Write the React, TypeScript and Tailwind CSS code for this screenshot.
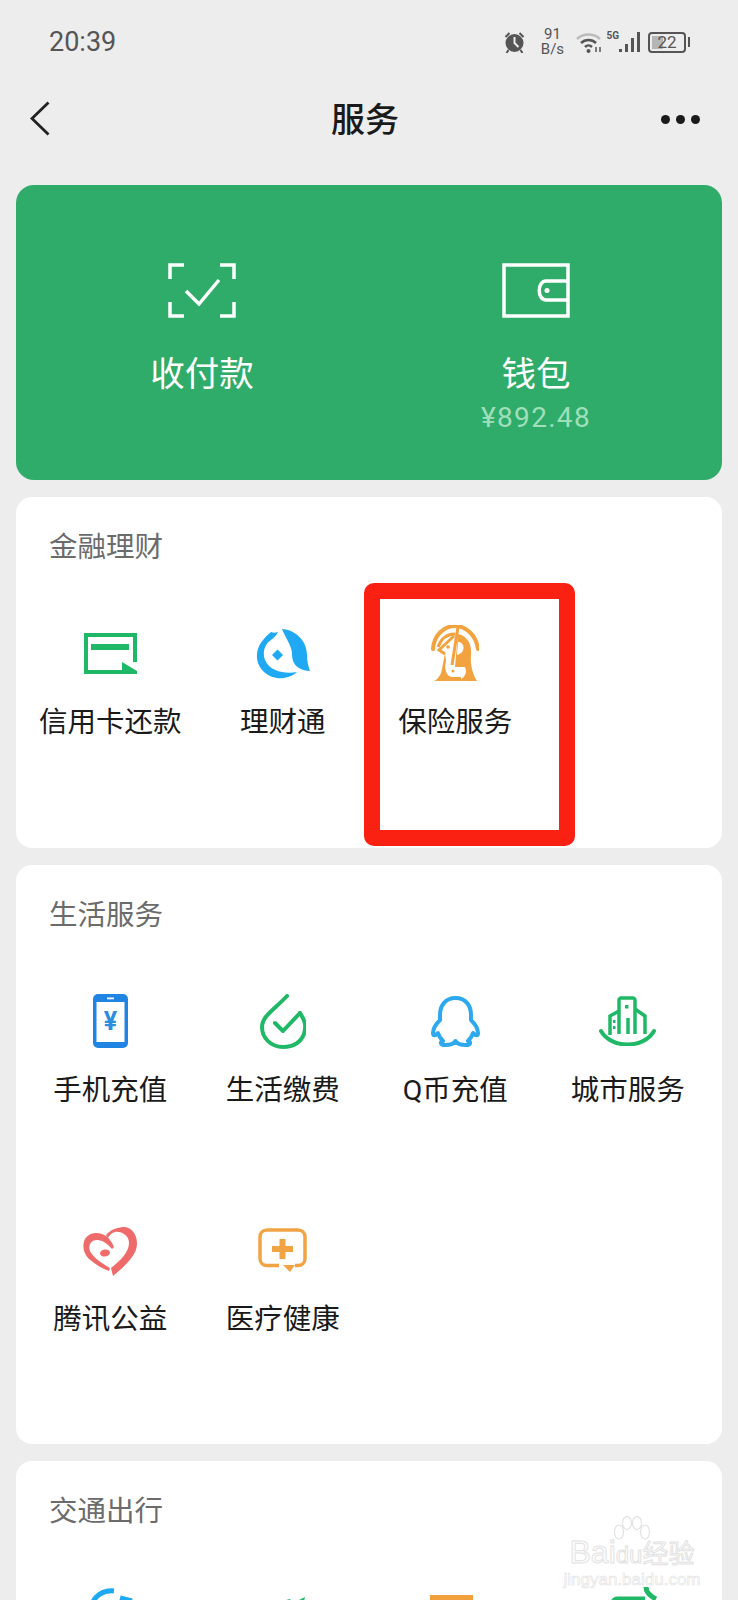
import { ReactNode } from 'react';

function Tile({ icon, label }: { icon: ReactNode; label?: string }) {
  return (
    <div className="flex h-[229px] flex-col items-center pt-[55px]">
      <div className="flex h-[64px] w-[64px] items-center justify-center">{icon}</div>
      {label && <div className="mt-[18px] text-[28.500px] leading-[40px] whitespace-nowrap text-[#1a1a1a]">{label}</div>}
    </div>
  );
}

function Section({ title, pb, children }: { title: string; pb: string; children: ReactNode }) {
  return (
    <section className={`rounded-[16px] bg-white pt-[31px] ${pb}`}>
      <h2 className="h-[38px] pl-[33px] text-[28.500px] leading-[40px] font-normal text-[#6b6b6b]">{title}</h2>
      <div className="grid grid-cols-4 px-[8px]">{children}</div>
    </section>
  );
}

const CardIcon = (
  <svg width="53" height="41" viewBox="0 0 53 41">
    <path d="M51 29V2H2v37h36" fill="none" stroke="#1fb866" strokeWidth="4" />
    <rect x="7" y="11" width="38" height="6" fill="#1fb866" />
    <path d="M38 29l15 9v3H38z" fill="#1fb866" />
  </svg>
);

const FishIcon = (
  <svg width="54" height="51" viewBox="0 0 54 51" fill="#1fa9f2">
    <path d="M15 4C8 10 0 18 1 30c1 12 13 22 27 20 6-1 10-3 13-6-11 2-27 0-32-12-3-8 0-16 6-20 4-3 6-6 7-8-3 1-5 1-7 0z" />
    <path d="M26 1c14 1 25 12 25 26 0 5 1 11 3 16-4 0-8-1-11-3-5-3-7-8-7-14 0-8-6-15-10-25z" />
    <path d="M21.500 21.500l5.500 5.500-5.500 5.500-5.500-5.500z" />
  </svg>
);

const InsuranceIcon = (
  <svg width="48" height="56" viewBox="0 0 48 56">
    <path d="M2 24C3 10 13 1 24 1c11 0 21 9 23 23" fill="none" stroke="#f2a23f" strokeWidth="4" strokeLinecap="round" />
    <path d="M7 22c3-8 9-13 17-13" fill="none" stroke="#f2a23f" strokeWidth="3" />
    <path d="M27 9c10 2 14 11 13 21-1 10 2 20 6 26H26c7-2 11-8 8-14H24z" fill="#f2a23f" />
    <path d="M14 28l-3 16c-1 6-4 10-8 12h27v-4h-8c-7 0-9-8-7-16z" fill="#f2a23f" />
    <path d="M23 11L8 25l6 4" fill="none" stroke="#f2a23f" strokeWidth="3" />
    <path d="M27 2l-6 38" fill="none" stroke="#f2a23f" strokeWidth="3" />
    <path d="M27 17c7 0 8 11-1 13z" fill="#fff" />
    <circle cx="17" cy="22" r="1.800" fill="#f2a23f" />
    <circle cx="22" cy="46" r="1.500" fill="#f2a23f" />
  </svg>
);

const PhoneIcon = (
  <svg width="35" height="54" viewBox="0 0 35 54">
    <rect width="35" height="54" rx="5" fill="#1f84e2" />
    <rect x="3.500" y="8" width="28" height="40" fill="#fff" />
    <rect x="14" y="3.500" width="7" height="1.800" fill="#fff" />
    <text x="17.500" y="36" textAnchor="middle" fontSize="25" fontWeight="700" fontFamily="Roboto, sans-serif" fill="#2b8ee0">¥</text>
  </svg>
);

const BillIcon = (
  <svg width="46" height="55" viewBox="0 0 46 55" fill="none" stroke="#1fb866" strokeWidth="4" strokeLinecap="round" strokeLinejoin="round">
    <path d="M27 2C15 15 2 22 2 33c0 11 9 20 21 20 9 0 17-3 21-13 2-7 2-12-4-21" />
    <path d="M15 29l8 8 17-18" />
  </svg>
);

const PenguinIcon = (
  <svg width="49" height="52" viewBox="0 0 49 52" fill="none" stroke="#2ea9ee" strokeWidth="4" strokeLinejoin="round">
    <path d="M24.500 3C14 3 9 11 9 20v5c-4 4-7 8-7 13 0 3 2 3 5 0 1 4 3 6 5 8-3 1-3 4 2 4 5 0 9-1 10.500-4C26 49 30 50 35 50c5 0 5-3 2-4 2-2 4-4 5-8 3 3 5 3 5 0 0-5-3-9-7-13v-5C40 11 35 3 24.500 3z" />
  </svg>
);

const CityIcon = (
  <svg width="57" height="50" viewBox="0 0 57 50" fill="none" stroke="#1fb866" strokeWidth="3.500">
    <path d="M2 35c10 18 43 18 53 0" strokeLinecap="round" strokeWidth="4" />
    <path d="M20 38V4c0-1 1-2 2-2h12c1 0 2 1 2 2v34" />
    <path d="M20 15l-9 5v19" />
    <path d="M36 13l10 7v18" />
    <path d="M29 38V22" />
    <rect x="26" y="9" width="3.500" height="3.500" fill="#1fb866" stroke="none" />
    <rect x="14" y="24" width="2.500" height="3" fill="#1fb866" stroke="none" />
    <rect x="14" y="30" width="2.500" height="3" fill="#1fb866" stroke="none" />
  </svg>
);

const HeartIcon = (
  <svg className="mt-[2px]" width="54" height="49" viewBox="0 0 54 49" fill="#ef6a6b">
    <path d="M30 49l-2-8c10-8 18-16 18-25 0-8-8-12-14-11-4 1-6 4-7 6l-2-3c5-6 13-8 19-8 8 1 12 9 12 17 0 11-12 22-24 32z" />
    <path d="M23 9C16 4 6 5 2 12c-3 6-2 14 4 20 6 5 14 10 20 12l1-3c-9-5-17-11-20-17-2-6 1-11 7-11 6 0 12 5 15 9l2-2c-2-5-5-9-8-11z" />
    <ellipse cx="22" cy="26" rx="5" ry="3.500" transform="rotate(-8 22 26)" />
  </svg>
);

const MedicalIcon = (
  <svg width="49" height="44" viewBox="0 0 49 44">
    <path d="M21 37.500H9c-4 0-7-3-7-7V9c0-4 3-7 7-7h31c4 0 7 3 7 7v21.500c0 4-3 7-7 7h-3" fill="none" stroke="#f2a445" strokeWidth="3.500" />
    <path d="M25 37h12l-5 7z" fill="#f2a445" />
    <path d="M21.500 11h6v7h7.500v6h-7.500v7h-6v-7H14v-6h7.500z" fill="#f2a445" />
  </svg>
);

// only the top of the third section's icons is on screen
const TrainIcon = (
  <svg width="64" height="64" viewBox="0 0 64 64" fill="none" stroke="#1fa9f2" strokeWidth="5">
    <path d="M13 22C16 10 26 5 36 6" />
    <path d="M42 13l12 3" />
  </svg>
);
const LeafIcon = (
  <svg width="64" height="64" viewBox="0 0 64 64" fill="#1fb866">
    <path d="M31 16l8-2 2 3h-8zM46 16l8-4-2 8h-6z" />
  </svg>
);
const HotelIcon = (
  <svg width="64" height="64" viewBox="0 0 64 64">
    <rect x="7" y="10" width="43" height="40" fill="#f2a03d" />
  </svg>
);
const BusIcon = (
  <svg width="64" height="64" viewBox="0 0 64 64" fill="none" stroke="#1fb866" strokeWidth="5">
    <path d="M17 30V18c0-2 2-4 4-4h28" />
    <path d="M50 2c0 5 4 9 10 12" />
  </svg>
);

function StatusBar() {
  return (
    <div className="flex h-[84px] items-center pr-[48px] pl-[49px] text-[#555]">
      <span className="text-[27px] leading-none">20:39</span>
      <div className="ml-auto flex items-center">
        <svg width="25" height="22" viewBox="0 0 24 22" fill="#555">
          <circle cx="12" cy="12" r="9" />
          <path d="M3 6l4-4M21 6l-4-4M6 19l-2 3M18 19l2 3" stroke="#555" strokeWidth="2" />
          <path d="M12 6v6l4 4" stroke="#ededed" strokeWidth="2" fill="none" />
        </svg>
        <div className="ml-[12px] flex w-[26px] flex-col items-center text-[15px] leading-[15px]">
          <span>91</span>
          <span>B/s</span>
        </div>
        <svg className="ml-[10px]" width="28" height="22" viewBox="0 0 28 22" fill="none">
          <path d="M2 8c6-6 17-6 23 0" stroke="#bbb" strokeWidth="2.500" />
          <path d="M6 12c4-4 11-4 15 0M10 16c2-2 5-2 7 0" stroke="#555" strokeWidth="2.500" />
          <circle cx="13.500" cy="20" r="2" fill="#555" />
          <path d="M21 16v5M25 16v5" stroke="#555" strokeWidth="1.500" />
        </svg>
        <span className="mb-[12px] ml-[3px] text-[10px] leading-none font-bold">5G</span>
        <svg width="23" height="22" viewBox="0 0 23 22" fill="#555">
          <rect x="0" y="18" width="3" height="3" />
          <rect x="6" y="13" width="3" height="8" />
          <rect x="12" y="7" width="3" height="14" />
          <rect x="18" y="1" width="3" height="20" />
        </svg>
        <div className="relative ml-[6px] flex h-[21px] w-[38px] items-center justify-center rounded-[4px] border-2 border-[#555] text-[17px] leading-none">
          <div className="absolute inset-y-[2px] left-[2px] w-[11px] bg-[#b5b5b5]" />
          <span className="relative">22</span>
        </div>
        <div className="ml-[2px] h-[10px] w-[2px] bg-[#555]" />
      </div>
    </div>
  );
}

export default function App() {
  return (
    <div className="relative h-[1600px] w-[738px] overflow-hidden bg-[#ededed] font-['Roboto','Noto_Sans_CJK_SC',sans-serif]">
      <StatusBar />

      <div className="mb-[29px] grid h-[72px] grid-cols-3 items-center pr-[38px] pl-[30px]">
        <svg className="mb-[4px]" width="20" height="35" viewBox="0 0 20 35" fill="none" stroke="#222" strokeWidth="2.800">
          <path d="M18.500 1.500L2 17.500l16.500 16" />
        </svg>
        <h1 className="justify-self-center text-[34px] leading-none font-medium text-[#1a1a1a]">服务</h1>
        <div className="mb-[2px] flex gap-[6px] justify-self-end">
          <span className="h-[9px] w-[9px] rounded-full bg-[#1a1a1a]" />
          <span className="h-[9px] w-[9px] rounded-full bg-[#1a1a1a]" />
          <span className="h-[9px] w-[9px] rounded-full bg-[#1a1a1a]" />
        </div>
      </div>

      <div className="flex flex-col gap-[17px] px-[16px]">
        <div className="grid h-[295px] grid-cols-2 rounded-[18px] bg-[#2fac69] px-[19px] pt-[78px] text-white">
          <div className="flex flex-col items-center">
            <svg width="68" height="55" viewBox="0 0 68 55" fill="none" stroke="#fff" strokeWidth="3.500">
              <path d="M16 2H2v14M52 2h14v14M16 53H2V39M52 53h14V39" />
              <path d="M18 28l13 13 20-24" />
            </svg>
            <div className="mt-[33px] text-[34.500px] leading-[46px]">收付款</div>
          </div>
          <div className="flex flex-col items-center">
            <svg width="68" height="55" viewBox="0 0 68 55" fill="none" stroke="#fff" strokeWidth="3.500">
              <path d="M2 2h64v51H2z" />
              <path d="M66 18H44c-9 0-9 19 0 19h22" />
              <circle cx="45" cy="27.500" r="2.500" fill="#fff" stroke="none" />
            </svg>
            <div className="mt-[33px] text-[34.500px] leading-[46px]">钱包</div>
            <div className="text-[28px] leading-[42px] tracking-[1.300px] text-[#a0dfbb]">¥892.48</div>
          </div>
        </div>

        <Section title="金融理财" pb="pb-[53px]">
          <Tile icon={CardIcon} label="信用卡还款" />
          <Tile icon={FishIcon} label="理财通" />
          <Tile icon={InsuranceIcon} label="保险服务" />
        </Section>

        <Section title="生活服务" pb="pb-[52px]">
          <Tile icon={PhoneIcon} label="手机充值" />
          <Tile icon={BillIcon} label="生活缴费" />
          <Tile icon={PenguinIcon} label="Q币充值" />
          <Tile icon={CityIcon} label="城市服务" />
          <Tile icon={HeartIcon} label="腾讯公益" />
          <Tile icon={MedicalIcon} label="医疗健康" />
        </Section>

        <Section title="交通出行" pb="pb-[52px]">
          <Tile icon={TrainIcon} />
          <Tile icon={LeafIcon} />
          <Tile icon={HotelIcon} />
          <Tile icon={BusIcon} />
        </Section>
      </div>

      {/* red annotation drawn over the screenshot */}
      <div className="absolute top-[583px] left-[364px] h-[263px] w-[211px] rounded-[10px] border-[16px] border-[#fb2112]" />

      {/* baidu watermark */}
      <div className="absolute top-[1516px] left-[566px] flex w-[132px] flex-col items-center font-['Liberation_Sans',sans-serif] text-white [-webkit-text-stroke:1px_#e2e2e2]">
        <svg className="mb-[-16px]" width="40" height="36" viewBox="0 0 40 36" fill="none" stroke="#e2e2e2" strokeWidth="1.200">
          <ellipse cx="7" cy="16" rx="4.500" ry="7" />
          <ellipse cx="15" cy="7" rx="4.500" ry="6.500" />
          <ellipse cx="25" cy="7" rx="4.500" ry="6.500" />
          <ellipse cx="33" cy="16" rx="4.500" ry="7" />
        </svg>
        <div className="text-[32px] leading-[32px] whitespace-nowrap">Bai<span className="text-[24px]">du</span><span className="font-['Noto_Sans_CJK_SC',sans-serif] text-[26px]">经验</span></div>
        <div className="text-[17px] leading-[18px] whitespace-nowrap [-webkit-text-stroke:0.6px_#e2e2e2]">jingyan.baidu.com</div>
      </div>
    </div>
  );
}
